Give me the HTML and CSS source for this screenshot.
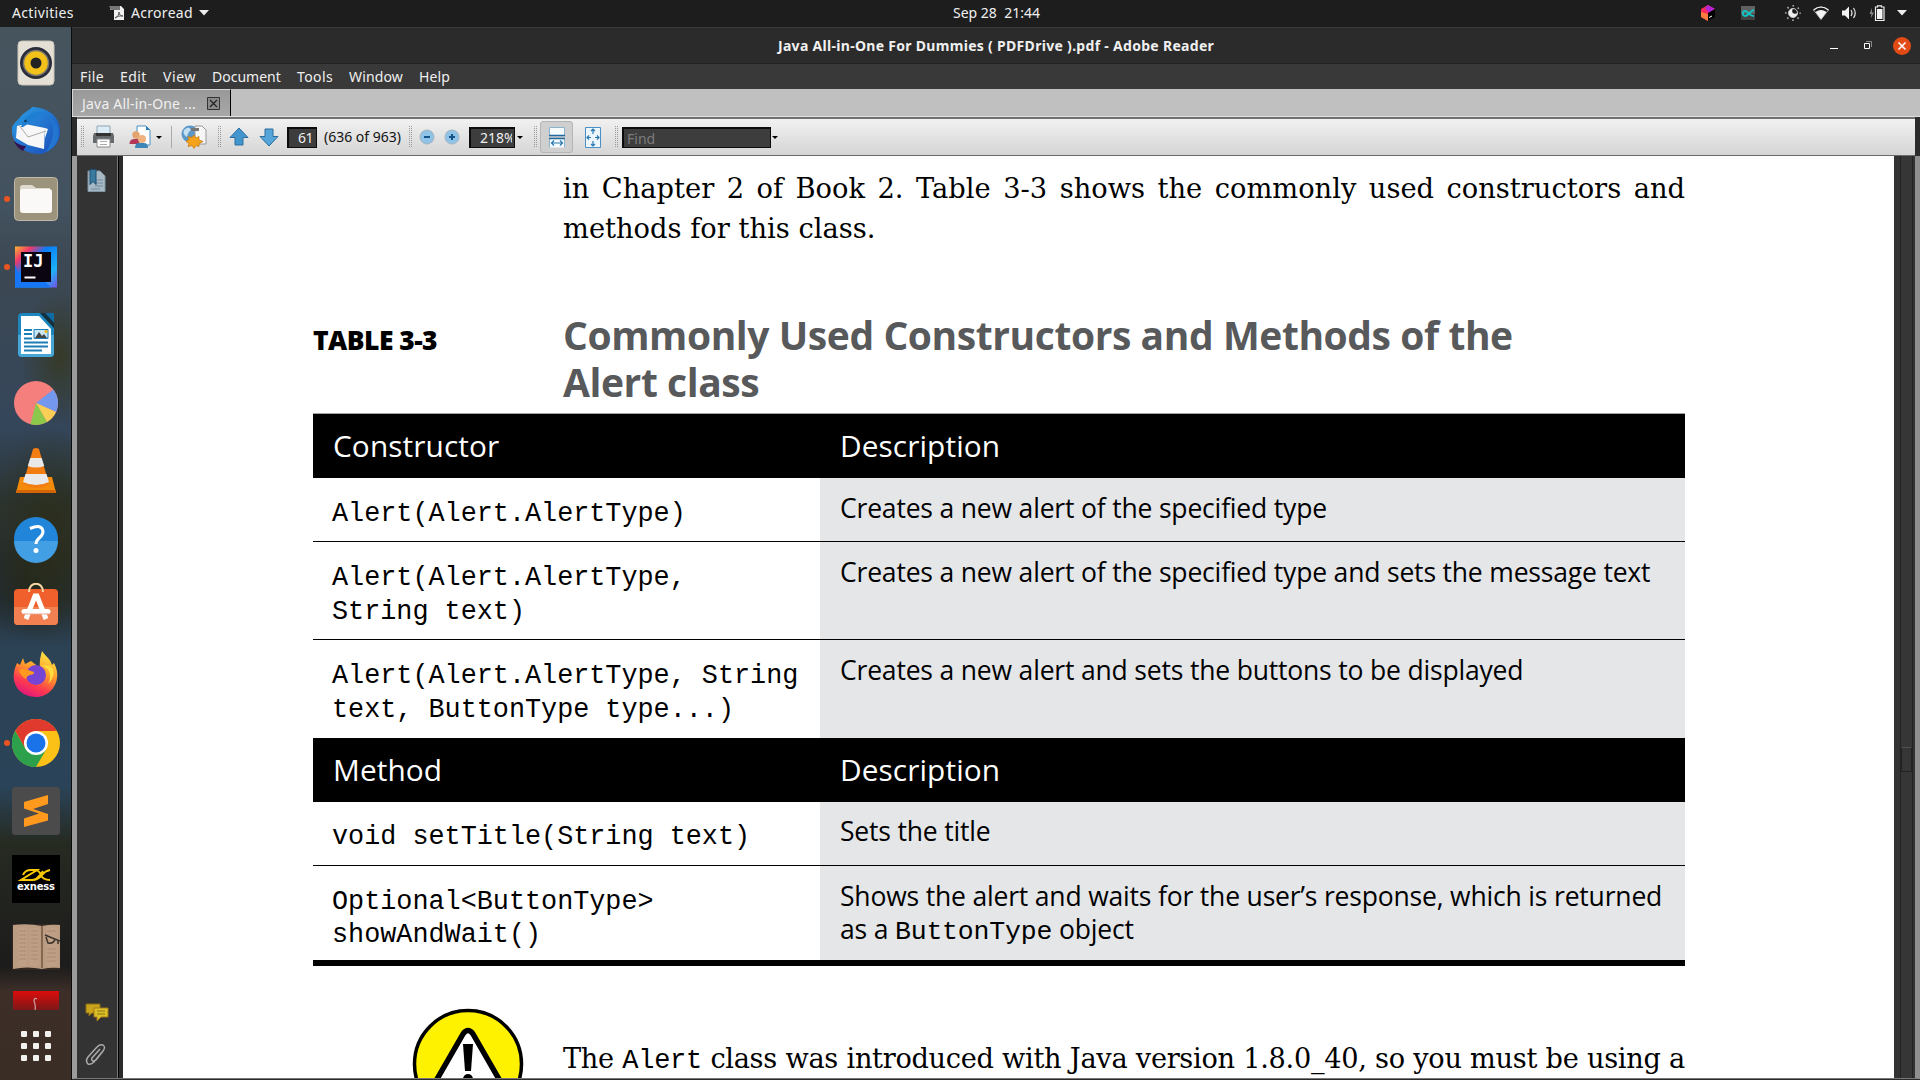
FILE: index.html
```html
<!DOCTYPE html>
<html lang="en">
<head>
<meta charset="utf-8">
<title>Java All-in-One For Dummies ( PDFDrive ).pdf - Adobe Reader</title>
<link rel="stylesheet" href="styles.css">
</head>
<body>
<header class="topbar">
  <span class="activities">Activities</span>
  <svg class="app-icon" width="16" height="16" viewBox="0 0 16 16"><path d="M3 1h9l3 3v11H5V5H1z" fill="#f2f2f2"/><path d="M0 1h11v4H2z" fill="#777"/><path d="M6 13c3-1 4-4 4-6 0 3 2 4 4 4-3-.5-6 .5-8 2z" fill="none" stroke="#555"/></svg>
  <span class="appname">Acroread</span>
  <svg width="10" height="6" viewBox="0 0 10 6"><path d="M0 0h10L5 5.500z" fill="#eee"/></svg>
  <span class="clock">Sep 28&nbsp; 21:44</span>
  <div class="tray">
    <svg width="16" height="16" viewBox="0 0 16 16"><path d="M8 0l7 4-3 5-4 7-7-4V4z" fill="#fb2a5c"/><path d="M8 0l7 4-6 4-4-5z" fill="#b126d6"/><path d="M1 7l7 2v7l-7-4z" fill="#ff7a3d"/><path d="M8 8l7-4v8l-7 4z" fill="#000"/><path d="M9 12.500l3-1.500" stroke="#fff"/></svg>
    <svg width="16" height="16" viewBox="0 0 16 16"><path d="M1 1h14v14H1z" fill="#606060"/><path d="M1 9h14v6H1z" fill="#424242"/><path d="M14 5c-3 0-5 6-9 6-3 0-3-5 0-5 3 0 4 5 9 5" fill="none" stroke="#12c4c4" stroke-width="1.800"/></svg>
    <svg width="16" height="16" viewBox="0 0 16 16"><circle cx="8" cy="8" r="4.500" fill="#eee"/><circle cx="10" cy="6" r="2.800" fill="#1d1d1d"/><circle cx="8" cy="8" r="4.500" fill="none" stroke="#ccc"/><circle cx="8" cy="8" r="7.200" fill="none" stroke="#aaa" stroke-width="1.600" stroke-dasharray="1.600 4.055" stroke-dashoffset=".8"/></svg>
    <svg width="16" height="16" viewBox="0 0 16 16"><path d="M.5 5q7.500-6 15 0L8 14.500z" fill="none" stroke="#999"/><path d="M2.500 7Q8 3 13.500 7L8 14.500z" fill="#f4f4f4"/><path d="M.5 5q7.500-6 15 0" fill="none" stroke="#eee" stroke-width="1.200"/></svg>
    <svg width="16" height="16" viewBox="0 0 16 16"><path d="M1 5.500h3l4-4v13l-4-4H1z" fill="#f4f4f4"/><path d="M10 5q2 3 0 6M12.500 3q3.500 5 0 10" fill="none" stroke="#ddd" stroke-width="1.300"/></svg>
    <svg width="16" height="16" viewBox="0 0 16 16"><path d="M3 3L.5 9h2L1.500 13.500 5 7.500H3z" fill="#888"/><path d="M8.500 2V.8h4V2H15v13.500H6.500V2z" fill="none" stroke="#eee" stroke-width="1.200"/><path d="M8 4h5.500v10H8z" fill="#f4f4f4"/></svg>
    <svg width="10" height="6" viewBox="0 0 10 6"><path d="M0 0h10L5 5.500z" fill="#eee"/></svg>
  </div>
</header>
<div class="desktop">
<nav class="dock">
  <div class="app"><svg width="48" height="48" viewBox="0 0 48 48"><rect x="6" y="2" width="36" height="44" rx="4" fill="#e4e0d5" stroke="#c9c4b5"/><circle cx="24" cy="24" r="16" fill="#2b2c3a"/><circle cx="24" cy="24" r="12.500" fill="#f2c21a" stroke="#77776f" stroke-width="1.500"/><circle cx="24" cy="24" r="5.500" fill="#222"/></svg></div>
  <div class="app"><svg width="48" height="48" viewBox="0 0 48 48"><defs><linearGradient id="tb" x1="0" x2="1" y2="1"><stop offset="0" stop-color="#2ba0e6"/><stop offset="1" stop-color="#1a49b8"/></linearGradient></defs><path d="M9 9C14 4 18 3 20 0c8 0 27 4 28 23 1 14-10 22-19 24C9 48-3 32 .5 19 3 15 6 13 9 9z" fill="url(#tb)"/><path d="M5 19l8-2 20 4-1 21L16 38 4 31z" fill="#f7f7f8"/><path d="M33 21l3 1-3 9z" fill="#f7f7f8"/><path d="M7 18l9 12 18-6" fill="none" stroke="#aaa"/><path d="M2 34q6 5 12 5l-3 5Q4 40 2 34z" fill="#331050"/><path d="M9 20C13 7 24 2 32 6L22 13l-11 7z" fill="#1e7fd2"/><circle cx="13.500" cy="14" r="1.300" fill="#123a60"/><path d="M34 7c10 11 9 22 0 38 16-7 18-27 0-38z" fill="#2376cf"/></svg></div>
  <div class="app running"><svg width="48" height="48" viewBox="0 0 48 48"><rect x="2.500" y="2.500" width="43" height="43" rx="4" fill="#9c937d" stroke="#c1b9a5"/><path d="M8 13q0-3 3-3h9l4 3h14v10H8z" fill="#dedacf"/><rect x="8" y="14" width="32" height="24" rx="3" fill="#faf9f8"/></svg></div>
  <div class="app running"><svg width="48" height="48" viewBox="0 0 48 48"><defs><linearGradient id="ij" x1="0" x2="1" y2="1"><stop offset="0" stop-color="#fdb82e"/><stop offset=".2" stop-color="#f0386b"/><stop offset=".4" stop-color="#087cfa"/><stop offset=".75" stop-color="#1eb1f8"/><stop offset="1" stop-color="#7652e6"/></linearGradient></defs><path d="M3 3.500h42v41H3z" fill="url(#ij)"/><path d="M3 22v22.500h36l-8-8H9z" fill="#1775f7"/><path d="M9 9h30v30H9z" fill="#0b0411"/><path d="M12.500 34.500h11" stroke="#fff" stroke-width="2"/><text x="11" y="24" class="ij">IJ</text></svg></div>
  <div class="app"><svg width="48" height="48" viewBox="0 0 48 48"><path d="M10 2h18l14 15v25q0 4-4 4H10q-4 0-4-4V6q0-4 4-4z" fill="#1c86bd"/><path d="M6 24h36v18q0 4-4 4H10q-4 0-4-4z" fill="#46a6d5"/><path d="M33 2h9v10z" fill="#0f6ba2"/><path d="M28 2h5l9 10v5z" fill="#12303f"/><path d="M9 5h18l12 13v25H9z" fill="#fff"/><path d="M12 19h8m-8 4h8m-8 4.500h8m-8 4h24m-24 4h24m-24 4h18" stroke="#1b7fb6" stroke-width="1.800"/><path d="M22 18.500h14v9H22z" fill="#c9e7f8" stroke="#1b7fb6"/><path d="M23 27l4-6 3 4 2-2 3 4z" fill="#444"/><circle cx="34" cy="20.500" r="1.500" fill="#efb700"/></svg></div>
  <div class="app"><svg width="48" height="48" viewBox="0 0 48 48"><circle cx="24" cy="24" r="22" fill="#f47f7c"/><path d="M24 24L41.300 10.400A22 22 0 0 1 44 33z" fill="#7498ee"/><path d="M24 24l20 9a22 22 0 0 1-9 10z" fill="#f9cf55"/><path d="M24 24l11 19a22 22 0 0 1-16.500 2.300z" fill="#8bc84c"/></svg></div>
  <div class="app"><svg width="48" height="48" viewBox="0 0 48 48"><path d="M8 30h32l4 16H4z" fill="#f58b0b"/><path d="M4 43h40v3H4z" fill="#d46605"/><path d="M21 2q3-2 6 0l10 35q-12 8-26 0z" fill="#f47d11"/><path d="M18.300 11h11.400l2.500 8Q24 22 15.800 19zM13.500 27h21l2.500 8q-13 6-26 0z" fill="#e9e9e9"/></svg></div>
  <div class="app"><svg width="48" height="48" viewBox="0 0 48 48"><circle cx="24" cy="24" r="22" fill="#2186d9"/><path d="M2 26h44a22 22 0 0 1-44 0z" fill="#429fe3"/><path d="M18 13.500q12-5 13 3c0 6.500-7 6-7 12.500" fill="none" stroke="#fff" stroke-width="3"/><circle cx="24" cy="35.500" r="2.500" fill="#fff"/></svg></div>
  <div class="app"><svg width="48" height="48" viewBox="0 0 48 48"><rect x="2" y="6" width="44" height="36" rx="4" fill="#f0602c"/><path d="M2 24h44v14q0 4-4 4H6q-4 0-4-4z" fill="#f28050"/><path d="M17 9c0-11 14-11 14 0" fill="none" stroke="#f7d9a4" stroke-width="2"/><path d="M14 36l9-23h2l9 23" fill="none" stroke="#fff" stroke-width="5"/><path d="M12 28.500h24" stroke="#fff" stroke-width="5" stroke-linecap="round"/><path d="M11 31h26" stroke="#e5a58a"/></svg></div>
  <div class="app"><svg width="48" height="48" viewBox="0 0 48 48"><defs><linearGradient id="ff" x1=".8" y1="0" x2=".35" y2="1"><stop offset="0" stop-color="#fff04a"/><stop offset=".45" stop-color="#ff9a2a"/><stop offset=".75" stop-color="#ff3b4e"/><stop offset="1" stop-color="#e0187d"/></linearGradient></defs><path d="M30 0c3 5 8 7 10 14l2-2c9 16-2 34-18 34C8 46-2 33 3 17l2-5 3 2 3-7 2 6 6-3 9 7c-1-7 1-13 2-17z" fill="url(#ff)"/><circle cx="24" cy="24" r="10" fill="#7644d2"/><path d="M7 19c5-3 11 1 15 2 1 4-7 1-8 7C10 26 8 23 7 19z" fill="#ff9a1e"/><path d="M28 15c9 0 13 10 8 18 9-8 8-22-8-18z" fill="#ffdc40"/></svg></div>
  <div class="app running"><svg width="48" height="48" viewBox="0 0 48 48"><circle cx="24" cy="24" r="24" fill="#fbc116"/><path d="M3.200 12A24 24 0 0 1 44.800 12H24L13.600 30z" fill="#e03a2e"/><path d="M3.200 12A24 24 0 0 0 24 48l10.400-18L24 36 13.600 30z" fill="#2da04c"/><circle cx="24" cy="24" r="12" fill="#fff"/><circle cx="24" cy="24" r="9.500" fill="#1a73e8"/></svg></div>
  <div class="app"><svg width="48" height="48" viewBox="0 0 48 48"><rect width="48" height="48" rx="3" fill="#4b4b4b"/><path d="M36 8v9l-15 5 15 5v6.500L12 40v-8.500l15-5-15-5V15z" fill="#ff9a1f"/></svg></div>
  <div class="app"><svg width="48" height="48" viewBox="0 0 48 48"><path d="M0 0h48v48H0z"/><path d="M11 20q2-5 8-5h6L9 25h12q4-1 7-5l3-4M23 15q4 0 6 5 2 5 9 5M22 25q5-1 8-5t8-5" fill="none" stroke="#fac800" stroke-width="2"/><text x="24" y="34.500" text-anchor="middle" textLength="38" class="ex">exness</text></svg></div>
  <div class="app"><svg width="48" height="48" viewBox="0 0 48 48"><path d="M0 1h48v46H0z" fill="#302821"/><path d="M1 2q15-2 29 1 9-2 18-1v43q-9-1-18 1-15-3-29 0z" fill="#ba9c83"/><path d="M6 5h9v38H6zM18 5h9v38h-9zM34 5h11v38H34z" fill="#bf9f86"/><path d="M7 8h7m-7 4h7m-7 4h7m-7 4h7m-7 4h7m-7 4h7m-7 4h7m-7 4h7M19 8h7m-7 4h7m-7 4h7m-7 4h7m-7 4h7m-7 4h7m-7 4h7m-7 4h7M35 8h9m-9 18h9m-9 4h9m-9 4h9m-9 4h9" stroke="#ab8a70"/><path d="M30 3v42" stroke="#74563f" stroke-width="1.500"/><path d="M33 12l15 6M34 14l2 6q6 1 7-4M46 17v4" fill="none" stroke="#3b332c" stroke-width="1.500"/></svg></div>
  <div class="app cut"><svg width="46" height="19" viewBox="0 0 46 19"><defs><linearGradient id="rd" y2="1" x2="0"><stop offset="0" stop-color="#dd0c0c"/><stop offset="1" stop-color="#7c1717"/></linearGradient></defs><path d="M0 0h46v19H0z" fill="url(#rd)"/><path d="M24 8q-3-2-3 2 2 5 1 9" fill="none" stroke="#c99" stroke-width="1.300"/></svg></div>
  <div class="apps-grid"><i></i><i></i><i></i><i></i><i></i><i></i><i></i><i></i><i></i></div>
</nav>
<main class="window">
  <div class="titlebar">
    <span class="wtitle">Java All-in-One For Dummies ( PDFDrive ).pdf - Adobe Reader</span>
    <div class="controls">
      <svg width="8" height="18" viewBox="0 0 8 18"><path d="M0 11.500h8" stroke="#fff"/></svg>
      <svg width="8" height="18" viewBox="0 0 8 18"><path d="M.5 6.500h5v5h-5z" fill="none" stroke="#fff"/><path d="M2 4.500h5.500V10" fill="none" stroke="#888"/></svg>
      <svg width="18" height="18" viewBox="0 0 18 18"><circle cx="9" cy="9" r="9" fill="#e24b16"/><path d="M5.500 5.500l7 7m0-7l-7 7" stroke="#fff" stroke-width="1.600"/></svg>
    </div>
  </div>
  <div class="menubar">
    <span class="m1">File</span><span class="m2">Edit</span><span class="m3">View</span><span class="m4">Document</span><span class="m5">Tools</span><span class="m6">Window</span><span class="m7">Help</span>
  </div>
  <div class="tabs"><div class="tab"><span class="tabname">Java All-in-One ...</span>
    <svg width="13" height="13" viewBox="0 0 13 13"><path d="M.5.500h12v12H.5z" fill="#8b8b8b" stroke="#333"/><path d="M3 3l7 7m0-7l-7 7" stroke="#222" stroke-width="1.200"/></svg></div></div>
  <div class="toolbar">
    <i class="grip g1"></i>
    <svg class="t-print" width="23" height="24" viewBox="0 0 23 24"><path d="M5 1h13v8H5z" fill="#dcecf6" stroke="#8fa5b3"/><path d="M2 8h19l1 3v7H1v-7z" fill="#66696c"/><path d="M4 8h15v3H4z" fill="#333"/><path d="M5 14h13v8H5z" fill="#fff" stroke="#888"/><path d="M8 16.500h7m-7 3h7" stroke="#aaa"/></svg>
    <svg class="t-share" width="23" height="24" viewBox="0 0 23 24"><path d="M8 1h9l4 4v15H8z" fill="#fff" stroke="#4b8fc4"/><path d="M17 1v4h4z" fill="#2b7fc0"/><circle cx="7" cy="10" r="3.700" fill="#e2a36c"/><path d="M.5 19q0-5 5-5h5v5z" fill="#b23a56"/><circle cx="13" cy="14" r="4" fill="#efb27c"/><path d="M6 23q0-5 4-5h5q4 0 4 5z" fill="#3d87b8"/></svg>
    <i class="caret c1"></i><i class="sep"></i>
    <svg class="t-globe" width="27" height="24" viewBox="0 0 27 24"><circle cx="9" cy="9" r="8.500" fill="#5b97c9"/><path d="M3 5q5-5 7 0-3 2-4 7-5-3-3-7z" fill="#c3dff0"/><path d="M14 1h7l4 4v14H14z" fill="#f6f6f6" stroke="#999"/><path d="M10 3h8v3h-8z" fill="#777"/><path d="M13 10l2 3 3-1.500v3.500l4 1.500-4 2v3l-3-1-2 3-2-3-4 1 1-3-3-2 3-2-1-3 4 1z" fill="#f5a21c" stroke="#c97500" stroke-width=".7"/></svg>
    <i class="grip g2"></i>
    <svg class="t-up" width="20" height="20" viewBox="0 0 20 20"><path d="M10 1l9 9.500h-5V18H6v-7.500H1z" fill="#4295cd" stroke="#2c6f9f"/></svg>
    <svg class="t-down" width="20" height="20" viewBox="0 0 20 20"><path d="M10 19l9-9.500h-5V2H6v7.500H1z" fill="#55a5d9" stroke="#2c6f9f"/></svg>
    <span class="field f1">61</span>
    <span class="count">(636 of 963)</span>
    <i class="grip g3"></i>
    <svg class="t-minus" width="16" height="16" viewBox="0 0 16 16"><circle cx="8" cy="8" r="7" fill="#8fc4e6" stroke="#a3b4c0"/><path d="M5 8h6" stroke="#14528a" stroke-width="2"/></svg>
    <svg class="t-plus" width="16" height="16" viewBox="0 0 16 16"><circle cx="8" cy="8" r="7" fill="#8fc4e6" stroke="#a3b4c0"/><path d="M5 8h6M8 5v6" stroke="#14528a" stroke-width="2"/></svg>
    <span class="field f2"><span class="zoom">218%</span></span><i class="caret c2"></i><i class="grip g4"></i>
    <span class="pressed"><svg width="16" height="21" viewBox="0 0 16 21"><path d="M.5.500h15v8H.5zM.5 20.500v-9h15v9" fill="#f5fafd" stroke="#8db4cf"/><path d="M0 8.500h16M0 11.500h16" stroke="#22689c" stroke-width="1.500"/><path d="M3 16h10M5 13.500L2.500 16 5 18.500m6-5l2.500 2.500L11 18.500" fill="none" stroke="#2878b2" stroke-width="1.200"/></svg></span>
    <svg class="t-fit" width="16" height="21" viewBox="0 0 16 21"><path d="M.5.500h15v20H.5z" fill="#edf6fb" stroke="#4b8fc4"/><path d="M8 2v5m0 7v5M2 10.500h4m4 0h4M6 4l2-2 2 2M6 17l2 2 2-2M4 8.500l-2 2 2 2m8-4l2 2-2 2" fill="none" stroke="#2878b2" stroke-width="1.200"/></svg>
    <i class="grip g5"></i>
    <span class="field f3">Find</span><i class="caret c3"></i>
  </div>
  <div class="work">
    <aside class="panel">
      <svg width="19" height="24" viewBox="0 0 19 24"><path d="M1 2h12l5 5v15.500H1z" fill="#a9b9c4" stroke="#7f95a3"/><path d="M8 11h8m-8 3h8m-8 3h8M4 20h9" stroke="#708ba0"/><path d="M3 .5h6v15l-3-3-3 3z" fill="#3b7a9f" stroke="#1c4e6e"/></svg>
      <div class="panel-bottom">
        <svg width="24" height="19" viewBox="0 0 24 19"><path d="M1 1h14v9H7l-3 3v-3H1z" fill="#c9a41a" stroke="#8a6e14"/><path d="M9 5h14v9h-7l-4 4v-4H9z" fill="#dcc028" stroke="#a5791a"/><path d="M12 8h8m-8 3h8" stroke="#8a7312"/></svg>
        <svg width="22" height="24" viewBox="0 0 22 24"><path d="M15 7l-8 9q-1 2 1 3 2 0 3-1l7-9q3-4 0-6-3-1-6 2l-9 10q-3 4 0 7 3 1 6-2l8-10" fill="none" stroke="#aaa" stroke-width="1.500"/></svg>
      </div>
    </aside>
    <article class="page">
      <p class="intro"><span class="just">in Chapter 2 of Book 2. Table 3-3 shows the commonly used constructors and</span><span>methods for this class.</span></p>
      <div class="caption"><span class="label">TABLE 3-3</span>
        <h1>Commonly Used Constructors and Methods of the<br>Alert class</h1></div>
      <div class="table">
        <div class="thead"><span>Constructor</span><span>Description</span></div>
        <div class="row r1"><code>Alert(Alert.AlertType)</code><div class="desc">Creates a new alert of the specified type</div></div>
        <div class="row r2"><code>Alert(Alert.AlertType,<br>String text)</code><div class="desc">Creates a new alert of the specified type and sets the message text</div></div>
        <div class="row r3"><code>Alert(Alert.AlertType, String<br>text, ButtonType type...)</code><div class="desc">Creates a new alert and sets the buttons to be displayed</div></div>
        <div class="thead"><span>Method</span><span>Description</span></div>
        <div class="row r4"><code>void setTitle(String text)</code><div class="desc">Sets the title</div></div>
        <div class="row r5"><code>Optional&lt;ButtonType&gt;<br>showAndWait()</code><div class="desc">Shows the alert and waits for the user’s response, which is returned<br>as a <span class="mono">ButtonType</span> object</div></div>
      </div>
      <div class="warning">
        <svg width="112" height="112" viewBox="0 0 112 112"><circle cx="56" cy="56" r="53.500" fill="#fff200" stroke="#000" stroke-width="3.500"/><path d="M51 26q5-7 10 0l38 66H13z" fill="#fff" stroke="#000" stroke-width="5.500" stroke-linejoin="round"/><path d="M51 36h10l-2 27h-6z"/><circle cx="56" cy="71" r="5"/></svg>
        <p class="just">The <span class="mono">Alert</span> class was introduced with Java version 1.8.0_40, so you must be using a</p>
      </div>
    </article>
    <div class="scroll"><div class="thumb"></div></div>
  </div>
</main>
</div>
</body>
</html>
```
FILE: styles.css
```css
* { box-sizing: border-box; }
body { margin: 0; width: 1920px; height: 1080px; overflow: hidden; background: #000; font: 14px/20px "Noto Sans", "Open Sans", sans-serif; color: #f0f0f0; }
svg { display: block; flex: none; }

.topbar { height: 27px; display: flex; align-items: center; background: #1d1d1d; padding: 0 13px 1px 12px; }
.activities { width: 97px; letter-spacing: .35px; }
.appname { width: 68px; margin-left: 6px; letter-spacing: .3px; }
.clock { margin-left: 744px; }
.tray { display: flex; align-items: center; gap: 12px; margin-left: auto; }
.tray svg:nth-child(2) { margin-left: 12px; }
.tray svg:nth-child(3) { margin-left: 17px; }

.desktop { display: flex; height: 1053px; }
.dock { width: 72px; flex: none; border-right: 1px solid #0c0c0c; padding-top: 2px; background:
  radial-gradient(ellipse 40px 70px at 60px 330px, #35361ccc, transparent),
  radial-gradient(ellipse 60px 110px at 50px 510px, #2c2d17dd, transparent),
  radial-gradient(ellipse 55px 60px at 30px 555px, #20241bdd, transparent),
  linear-gradient(#46545e 0, #43525f 180px, #3c4853 240px, #34465a 400px, #2b3330 480px, #253038 570px, #2c4255 620px, #2b4358 760px, #262b22 815px, #22241f 870px, #1d1c1c 940px, #3d2f28 965px, #3a2d26 1053px); }
.app { height: 68px; width: 72px; display: flex; align-items: center; justify-content: center; position: relative; }
.running::before { content: ""; position: absolute; left: 4px; top: 31px; width: 6px; height: 6px; border-radius: 50%; background: #e95420; }
.cut { height: 19px; margin-top: 10px; }
.apps-grid { display: grid; grid-template-columns: repeat(3, 6px); gap: 6px; margin: 21px 0 0 21px; }
.apps-grid i { height: 6px; border-radius: 1px; background: #f1f1ee; }
.ij { font: bold 17px "DejaVu Sans Mono", monospace; fill: #fff; }
.ex { font: bold 10px "DejaVu Sans", sans-serif; fill: #fff; }

.window { flex: 1; display: flex; flex-direction: column; background: #2b2b2b; min-width: 0; }
.titlebar { height: 37px; border-top: 1px solid #3a3a3a; border-bottom: 1px solid #222; display: flex; align-items: center; padding-left: 706px; font-weight: 700; letter-spacing: .3px; }
.controls { display: flex; gap: 26px; margin-left: auto; padding-right: 9px; }
.controls svg:last-child { margin-left: -5px; }
.menubar { height: 25px; background: #393939; display: flex; align-items: center; padding-left: 8px; letter-spacing: .4px; }
.m1 { width: 40px; } .m2 { width: 43px; } .m3 { width: 49px; letter-spacing: .6px; } .m4 { width: 85px; letter-spacing: 0; }
.m5 { width: 52px; } .m6 { width: 70px; letter-spacing: .15px; } .m7 { letter-spacing: .1px; }
.tabs { height: 28px; background: #c0c0c0; border-bottom: 1px solid #dedede; display: flex; flex: none; }
.tab { width: 159px; background: linear-gradient(#999, #a7a7a7); border: solid #d6d6d6; border-width: 1px 0 0 1px; border-right: 1px solid #000; display: flex; align-items: center; padding: 1px 0 0 9px; }
.tabname { width: 125px; letter-spacing: .2px; }
.toolbar { height: 39px; margin: 0 5px; flex: none; display: flex; align-items: center; background: linear-gradient(#f1f1f1, #d5d5d5); border-top: 2px solid #717171; border-bottom: 1px solid #6b6b6b; color: #111; }
.grip { width: 4px; height: 22px; flex: none; background: conic-gradient(#9a9a9a 25%, transparent 0) 0 0 / 2px 2px; }
.g1 { margin-left: 3px; }
.t-print { margin-left: 8px; }
.t-share { margin-left: 14px; }
.caret { border: solid transparent; border-width: 3px 3px 0; border-top-color: #000; flex: none; }
.c1 { margin-left: 4px; }
.sep { width: 1px; height: 22px; background: #aaa; margin-left: 9px; }
.t-globe { margin-left: 9px; }
.g2 { margin-left: 9px; }
.t-up { margin-left: 8px; }
.t-down { margin-left: 10px; }
.field { height: 21px; flex: none; background: #3d3d3d; border: 2px solid #0c0c0c; border-width: 2px 1px 1px 2px; color: #eee; line-height: 18px; overflow: hidden; white-space: nowrap; }
.f1 { width: 30px; margin-left: 8px; padding-left: 9px; letter-spacing: -.4px; }
.count { width: 77px; margin-left: 7px; white-space: nowrap; }
.g3 { margin-left: 7px; }
.t-minus { margin-left: 7px; }
.t-plus { margin-left: 9px; }
.f2 { width: 46px; margin-left: 9px; padding-left: 9px; }
.zoom { display: block; width: 32px; overflow: hidden; }
.c2 { margin-left: 2px; }
.g4 { margin-left: 10px; }
.pressed { width: 33px; height: 32px; margin-left: 3px; border: 1px solid #b5b5b5; border-radius: 3px; background: #cfcfcf; display: grid; place-items: center; }
.t-fit { margin-left: 12px; }
.g5 { margin-left: 13px; }
.f3 { width: 149px; margin-left: 4px; padding-left: 3px; color: #7c7c7c; line-height: 20px; }
.c3 { margin-left: 1px; }

.work { display: flex; height: 923px; background: #333; border-left: 5px solid #9c9c9c; border-bottom: 1px solid #777; border-right: 5px solid #8f8f8f; }
.panel { width: 46px; flex: none; border-right: 4px solid #2b2b2b; display: flex; flex-direction: column; justify-content: space-between; padding: 13px 0 12px 10px; box-shadow: inset -1px 0 #000, inset -2px 0 #777; }
.panel-bottom { display: grid; gap: 20px; margin-left: -2px; }
.page { width: 1771px; flex: none; background: #fff; color: #000; overflow: hidden; padding: 13px 209px 0 190px; }
.scroll { width: 13px; margin-left: 6px; border: solid #222; border-width: 0 1px; background: #363636; padding-top: 591px; }
.thumb { height: 25px; border: 1px solid #222; border-top-color: #505050; }

.intro { margin: 0 0 0 250px; font: 27.300px/40px "DejaVu Serif", serif; }
.just { display: block; text-align-last: justify; white-space: nowrap; }
.caption { display: flex; margin-top: 62px; font-family: "Open Sans", sans-serif; }
.label { width: 250px; padding-top: 6px; font-weight: 800; font-size: 26.500px; line-height: 47px; letter-spacing: -.56px; }
h1 { margin: 0; font-size: 39px; line-height: 47px; font-weight: 700; color: #58595b; letter-spacing: -.42px; white-space: nowrap; }
.table { margin-top: 8px; border-top: 1px solid #a0a5a5; border-bottom: 6px solid #000; font-family: "Open Sans", sans-serif; }
.thead { display: grid; grid-template-columns: 507px 1fr; height: 64px; line-height: 63px; background: #000; color: #fff; font-size: 29.800px; padding-left: 20px; letter-spacing: .1px; }
.row { display: grid; grid-template-columns: 507px 1fr; border-bottom: 1px solid #000; }
.row code { padding: 19px 0 0 19px; font: 26.800px/34px "Liberation Mono", monospace; white-space: nowrap; }
.desc { background: #e5e6e8; padding: 14px 0 0 20px; font-size: 26.500px; line-height: 33px; letter-spacing: -.18px; white-space: nowrap; }
.mono { font-family: "Liberation Mono", monospace; }
.r1, .r4 { height: 64px; }
.r2, .r3 { height: 98px; }
.r3, .r5 { border-bottom: 0; }
.r4 code { padding-top: 18px; }
.r4 .desc { padding-top: 13px; }
.r5 { height: 94px; }
.r5 code { padding-top: 20px; line-height: 33px; }
.warning { display: flex; margin-top: 42px; padding-left: 99px; font: 27.200px/40px "DejaVu Serif", serif; }
.warning p { width: 1122px; margin: 31px 0 0 39px; letter-spacing: -.3px; }
.warning .mono { font-size: 27px; }
```
